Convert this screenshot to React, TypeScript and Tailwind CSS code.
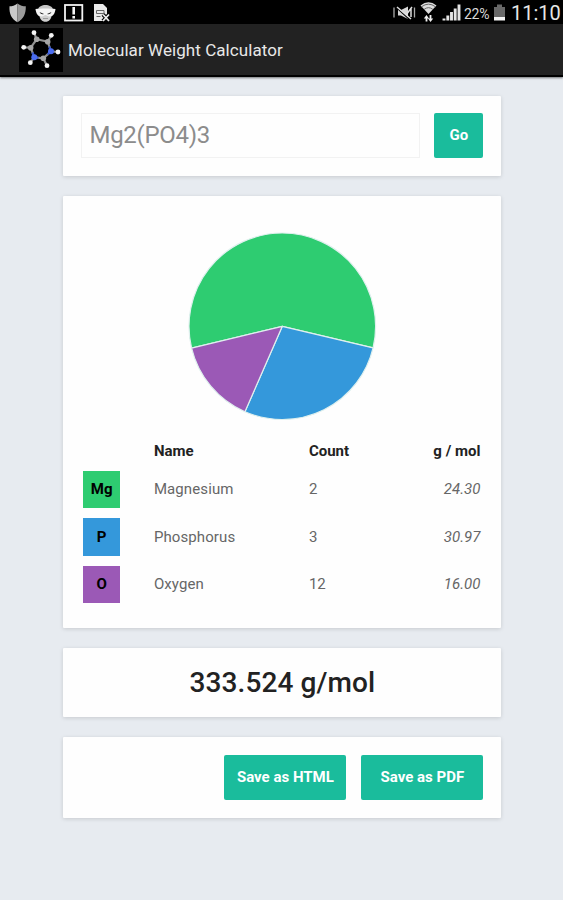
import React from 'react';

const ELEMENTS = [
  { symbol: 'Mg', name: 'Magnesium', count: 2, mass: '24.30', bg: 'bg-[#2ecc71]' },
  { symbol: 'P', name: 'Phosphorus', count: 3, mass: '30.97', bg: 'bg-[#3498db]' },
  { symbol: 'O', name: 'Oxygen', count: 12, mass: '16.00', bg: 'bg-[#9b59b6]' },
];

// Angles in degrees, clockwise from 3 o'clock
const SLICES = [
  { from: 166.5, to: 373.4, color: '#2ecc71' },
  { from: 13.4, to: 113.6, color: '#3498db' },
  { from: 113.6, to: 166.5, color: '#9b59b6' },
];

const slicePath = (from: number, to: number) => {
  const r = 93.3;
  const point = (deg: number) => {
    const rad = (deg * Math.PI) / 180;
    return `${(94.3 + r * Math.cos(rad)).toFixed(2)} ${(94.3 + r * Math.sin(rad)).toFixed(2)}`;
  };
  return `M94.3 94.3 L${point(from)} A${r} ${r} 0 ${to - from > 180 ? 1 : 0} 1 ${point(to)} Z`;
};

const StatusBar: React.FC = () => (
  <div className="h-6 bg-black flex items-center justify-between pl-[8px] pr-[3px]">
    <svg width="104" height="24" viewBox="0 0 104 24">
      {/* Shield */}
      <path d="M9.5 3.5 C7 5.5 4 6.3 1.5 6.3 C1 14 3.5 19 9.5 22.3 Z" fill="#c9c9c9" />
      <path d="M9.5 3.5 C12 5.5 15 6.3 17.8 6.3 C18 14 15.5 19 9.5 22.3 Z" fill="#9b9b9b" />
      {/* Mask */}
      <path d="M30 9.5 C31 3.5 44 3.5 45 9.5 Z" fill="#c4c4c4" />
      <path d="M31 14 H44 C43.5 19 41 21.8 37.5 21.8 C34 21.8 31.5 19 31 14 Z" fill="#cfcfcf" />
      <path d="M27.5 9 C33 8.3 42 8.3 47.5 9 C47 13 45.5 16.5 41.5 16.5 C39.5 16.5 38.5 15 37.5 15 C36.5 15 35.5 16.5 33.5 16.5 C29.5 16.5 28 13 27.5 9 Z" fill="#f4f4f4" />
      <path d="M31.5 12 L36 14 Q33 15.3 31.5 12 Z M43.5 12 L39 14 Q42 15.3 43.5 12 Z" fill="#222" />
      <path d="M35 18.5 H40" stroke="#999" />
      {/* Alert */}
      <rect x="57" y="5" width="17.3" height="15.5" fill="none" stroke="#f2f2f2" strokeWidth="1.8" />
      <path d="M65.7 7 V14.5 M65.7 16 V18.6" stroke="#f5f5f5" strokeWidth="2.6" />
      {/* Document */}
      <path d="M86 4 H95 L99 8 V21 H86 Z" fill="#e9e9e9" />
      <path d="M88.5 10.5 h7.5 v3 h-7.5 z M88.5 16.5 h4" fill="none" stroke="#666" />
      <path d="M95 14.5 L101 21 M101 14.5 L95 21" stroke="#000" strokeWidth="4" />
      <path d="M95 14.5 L101 21 M101 14.5 L95 21" stroke="#eee" strokeWidth="1.8" />
    </svg>
    <div className="flex items-center">
      <svg width="70" height="24" viewBox="0 0 70 24">
        {/* Vibrate off */}
        <path d="M2 7.5 V17.5 M22.5 7.5 V17.5" stroke="#aaa" strokeWidth="1.3" />
        <path d="M6 10 H9 L16 6.5 V19 L9 15.5 H6 Z" fill="#d8d8d8" />
        <path d="M5.5 8.5 L18 20" stroke="#000" strokeWidth="1.2" />
        <path d="M5 7 L19 19 M14 15 L20 7 M19 9 V17" stroke="#e0e0e0" strokeWidth="1.5" />
        {/* Wifi with traffic arrows */}
        <path d="M28.5 5.5 Q36.5 -1 44.5 5.5 L36.5 14 Z" fill="#ddd" />
        <path d="M29.5 6.8 Q36.5 1.5 43.5 6.8 M32 9.5 Q36.5 5.8 41 9.5" fill="none" stroke="#666" strokeWidth="1" />
        <path d="M34.5 21.5 V17 M38.5 15 V20" stroke="#f0f0f0" strokeWidth="1.8" />
        <path d="M31.8 18.5 L34.5 15 L37 18.5 Z M36 18.5 L38.5 22 L41.2 18.5 Z" fill="#f0f0f0" />
        {/* Signal */}
        <path d="M52 20.5 V18.5 M55.8 20.5 V15.5 M59.5 20.5 V12 M63.2 20.5 V8.5 M67 20.5 V4.5" stroke="#e4e4e4" strokeWidth="2.9" />
      </svg>
      <span className="pl-[2px] pt-[3px] w-[31px] text-[14px] leading-5 tracking-[-0.3px] text-[#d8d8d8]">22%</span>
      <svg width="13" height="24" viewBox="0 0 13 24">
        <path d="M4 4.5 H9 V7 H12 V17 H1 V7 H4 Z" fill="#686868" />
        <path d="M1 17 H12 V20.5 H1 Z" fill="#f4f4f4" />
      </svg>
      <span className="pl-[5px] pt-[1px] w-[54px] whitespace-nowrap text-[20px] leading-6 text-[#e6e6e6]">11:10</span>
    </div>
  </div>
);

const MoleculeLogo: React.FC = () => (
  <svg width="44" height="44" viewBox="0 0 44 44" className="bg-black">
    <g stroke="#8f8f8f" strokeWidth="2.2">
      <path d="M17.7 11.3 L28.7 13.7 L32 23.3 L24.3 30.3 L15.3 29.3 L11.7 19.7 Z" fill="none" />
      <path d="M17.7 11.3 L15 4.7 M28.7 13.7 L32.3 7.3 M32 23.3 L39 24 M24.3 30.3 L28 37.7 M15.3 29.3 L11.3 34.7 M11.7 19.7 L4.7 19.3" />
    </g>
    <path d="M30.3 18.5 L32 23.3 L28.5 26.5 M19.5 29.8 L15.3 29.3 L13.5 24.5" fill="none" stroke="#3553c4" strokeWidth="2.2" />
    <g fill="#a5a5a5">
      <circle cx="17.7" cy="11.3" r="2.8" />
      <circle cx="28.7" cy="13.7" r="2.8" />
      <circle cx="11.7" cy="19.7" r="2.8" />
      <circle cx="24.3" cy="30.3" r="2.8" />
    </g>
    <circle cx="32" cy="23.3" r="3" fill="#4a6cf0" />
    <circle cx="15.3" cy="29.3" r="3" fill="#4a6cf0" />
    <g fill="#f4f4f4">
      <circle cx="15" cy="4.7" r="2.4" />
      <circle cx="32.3" cy="7.3" r="2.4" />
      <circle cx="4.7" cy="19.3" r="2.4" />
      <circle cx="39" cy="24" r="2.4" />
      <circle cx="11.3" cy="34.7" r="2.4" />
      <circle cx="28" cy="37.7" r="2.4" />
    </g>
  </svg>
);

const Card: React.FC<{ className: string; children: React.ReactNode }> = ({ className, children }) => (
  <section className={`bg-[#fefefe] rounded-[1px] shadow-[0_1px_4px_rgba(0,0,0,0.14)] ${className}`}>{children}</section>
);

const Button: React.FC<{ className: string; children: React.ReactNode }> = ({ className, children }) => (
  <button className={`h-[45px] rounded-[2px] bg-[#1abc9c] text-white font-bold text-[15px] ${className}`}>{children}</button>
);

const App: React.FC = () => {
  return (
    <div className="h-[900px] overflow-hidden bg-[#e7ebf0] font-[Roboto,sans-serif]">
      <StatusBar />
      <header className="h-[53px] bg-[#222] border-b-2 border-black pl-[19px] pt-[1px] flex items-center gap-[5px] shadow-[0_1px_2px_rgba(0,0,0,0.5)]">
        <MoleculeLogo />
        <h1 className="pt-[2px] text-[17px] tracking-[0.07px] text-[#e8e8e8] whitespace-nowrap">Molecular Weight Calculator</h1>
      </header>

      <main className="w-[438px] ml-[63.4px] pt-[19px] flex flex-col gap-5">
        <Card className="h-20 pl-[17.6px] pr-[18px] pb-[2px] flex items-center justify-between">
          <input
            defaultValue="Mg2(PO4)3"
            className="w-[339px] h-[45px] border border-[#f2f2f2] bg-transparent px-[7.5px] text-[24px] tracking-[-0.3px] text-[#8c8c8c] outline-none"
          />
          <Button className="w-[49px]">Go</Button>
        </Card>

        <Card className="h-[432px] pt-9">
          <svg width="189" height="188" viewBox="0 0 189 188" className="mx-auto">
            {SLICES.map((s) => (
              <path key={s.color} d={slicePath(s.from, s.to)} fill={s.color} stroke="#dff0ee" strokeWidth="1.2" strokeLinejoin="round" />
            ))}
          </svg>

          <div className="mt-[17px] pl-[19.5px] pr-[21px] text-[15px]">
            <div className="grid grid-cols-[71px_155px_1fr] h-[28.5px] items-center font-bold text-[#222]">
              <span />
              <span>Name</span>
              <div className="flex justify-between">
                <span>Count</span>
                <span>g / mol</span>
              </div>
            </div>
            {ELEMENTS.map((el) => (
              <div key={el.symbol} className="grid grid-cols-[71px_155px_1fr] h-[47.6px] items-center text-[#666]">
                <span className={`size-[37.5px] flex items-center justify-center font-bold text-black ${el.bg}`}>{el.symbol}</span>
                <span className="tracking-[0.1px]">{el.name}</span>
                <div className="flex justify-between">
                  <span>{el.count}</span>
                  <span className="italic">{el.mass}</span>
                </div>
              </div>
            ))}
          </div>
        </Card>

        <Card className="h-[69px] pt-[1px] flex items-center justify-center">
          <h2 className="text-[28px] tracking-[0.1px] font-medium text-[#222]">333.524 g/mol</h2>
        </Card>

        <Card className="h-[81px] pr-[18px] flex items-center justify-end gap-[15px]">
          <Button className="w-[122px]">Save as HTML</Button>
          <Button className="w-[122px]">Save as PDF</Button>
        </Card>
      </main>
    </div>
  );
};

export default App;
